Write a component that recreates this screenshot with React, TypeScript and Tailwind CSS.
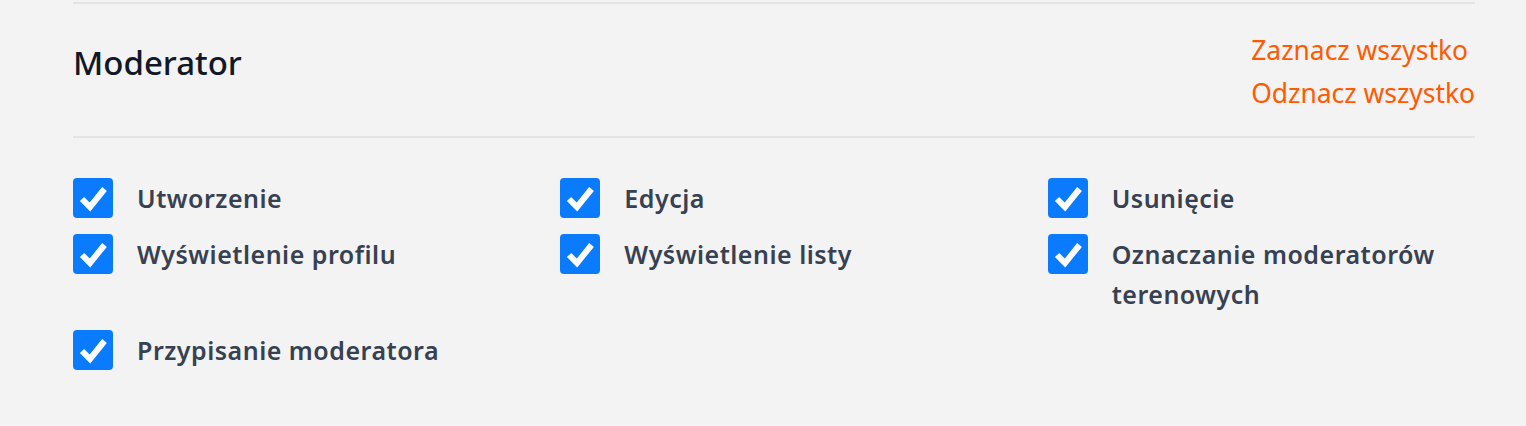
import React from 'react';

const permissions = [
  'Utworzenie',
  'Edycja',
  'Usunięcie',
  'Wyświetlenie profilu',
  'Wyświetlenie listy',
  'Oznaczanie moderatorów terenowych',
  'Przypisanie moderatora',
];

function CheckedBox() {
  return (
    <svg width="40" height="40" viewBox="0 0 40 40" className="shrink-0">
      <rect x="0" y="0" width="40" height="40" rx="4" fill="#0b7bfe" />
      <path d="M9 21 L17 29 L31.5 11" fill="none" stroke="#ffffff" strokeWidth="6" strokeLinejoin="miter" />
    </svg>
  );
}

export default function App() {
  return (
    <div
      className="min-h-[426px] w-full bg-[#f3f3f3] pl-[73px] pr-[51px]"
      style={{ fontFamily: '"Noto Sans", "Open Sans", sans-serif' }}
    >
      <div className="h-[2px]" />
      <div className="border-t-2 border-[#e4e4e6]">
        {/* Header */}
        <div className="flex items-start justify-between border-b-2 border-[#e4e4e6] pt-[25px] pb-[21px]">
          <h2 className="mt-[14px] text-[33px] font-medium leading-[40px] text-[#111827]">Moderator</h2>
          <div className="flex flex-col items-start text-[26.4px] leading-[43px] text-[#ff5a00]">
            <button className="cursor-pointer">Zaznacz wszystko</button>
            <button className="cursor-pointer">Odznacz wszystko</button>
          </div>
        </div>

        {/* Permissions */}
        <div className="grid grid-cols-3 gap-x-[60px] gap-y-4 pt-[40px] pb-[56px]">
          {permissions.map((p) => (
            <label key={p} className="flex items-start gap-6 cursor-pointer">
              <CheckedBox />
              <span className="text-[25px] font-semibold leading-[40px] tracking-[0.5px] text-[#374151]">{p}</span>
            </label>
          ))}
        </div>
      </div>
    </div>
  );
}
